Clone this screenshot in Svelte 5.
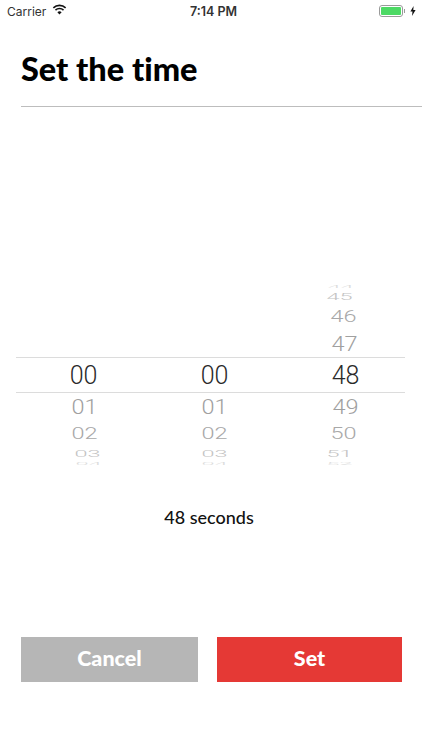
<script>
  const rows = [
    { h: 5, sy: 0.18, c: '#dcdcdc' },
    { h: 15, sy: 0.42, c: '#c4c4c4' },
    { h: 26, sy: 0.68, c: '#a8a8a8' },
    { h: 28, sy: 0.88, c: '#a0a0a0' },
    { h: 35, sy: 1, c: '#2a2a2a', cur: true },
    { h: 28, sy: 0.88, c: '#a0a0a0' },
    { h: 26, sy: 0.68, c: '#a8a8a8' },
    { h: 14, sy: 0.42, c: '#c4c4c4' },
    { h: 6, sy: 0.18, c: '#dcdcdc' }
  ];
  const cols = [
    { key: 'h', vals: ['', '', '', '', '00', '01', '02', '03', '04'], dx: [0, 0, 0, 0, 0, 1, 1, 4, 5] },
    { key: 'm', vals: ['', '', '', '', '00', '01', '02', '03', '04'], dx: [0, 0, 0, 0, 0, 0, 0, 0, 0] },
    { key: 's', vals: ['44', '45', '46', '47', '48', '49', '50', '51', '52'], dx: [-5, -6, -2, -1, 0, 0, -2, -6, -6] }
  ];
</script>

<div class="screen">
  <div class="status">
    <div class="left">
      <span>Carrier</span>
      <svg width="15" height="11" viewBox="0 0 16 12" aria-hidden="true">
        <path d="M8 11.5 5.7 8.9a3.4 3.4 0 0 1 4.6 0Z" fill="#111"/>
        <path d="M3.6 6.7a6.3 6.3 0 0 1 8.8 0" fill="none" stroke="#111" stroke-width="1.7"/>
        <path d="M1.3 4.2a9.6 9.6 0 0 1 13.4 0" fill="none" stroke="#111" stroke-width="1.7"/>
      </svg>
    </div>
    <div class="clock">7:14 PM</div>
    <div class="right">
      <span class="battery"><span class="fill"></span></span>
      <span class="nub"></span>
      <svg width="6" height="10" viewBox="0 0 6 10" aria-hidden="true">
        <path d="M3.6 0 .4 5.6h2.1L2 10l3.6-6H3.3Z" fill="#111"/>
      </svg>
    </div>
  </div>

  <h1>Set the time</h1>
  <div class="rule"></div>

  <div class="picker">
    <div class="band"></div>
    {#each cols as col (col.key)}
      <div class="col">
        {#each rows as r, i}
          <div class="row" class:cur={r.cur} style="height:{r.h}px;color:{r.c}">
            <span style="transform:translate({col.dx[i]}px,1px) scaleY({r.sy})">{col.vals[i]}</span>
          </div>
        {/each}
      </div>
    {/each}
  </div>

  <p class="summary">48 seconds</p>

  <div class="actions">
    <button class="cancel">Cancel</button>
    <button class="set">Set</button>
  </div>
</div>

<style>
  :global(body) {
    margin: 0;
    background: #fff;
  }
  .screen {
    width: 422px;
    height: 750px;
    display: flex;
    flex-direction: column;
    background: #fff;
    overflow: hidden;
    font-family: "Liberation Sans", Arial, sans-serif;
  }
  .status {
    height: 22px;
    display: grid;
    grid-template-columns: 183px auto 1fr;
    align-items: center;
    padding: 0 6px 0 7px;
    font-family: Inter, "Liberation Sans", sans-serif;
    font-size: 12px;
    color: #333;
  }
  .left {
    display: flex;
    align-items: center;
    gap: 6px;
  }
  .left svg {
    margin-top: -4px;
  }
  .clock {
    font-weight: 600;
    font-size: 12.5px;
  }
  .right {
    display: flex;
    justify-content: flex-end;
    align-items: center;
  }
  .battery {
    width: 24px;
    height: 12px;
    box-sizing: border-box;
    border: 1px solid #9a9a9a;
    border-radius: 3px;
    padding: 1px;
    display: block;
  }
  .fill {
    display: block;
    height: 100%;
    background: #4cd964;
    border-radius: 1px;
  }
  .nub {
    width: 1.5px;
    height: 4px;
    background: #9a9a9a;
    margin: 0 5px 0 1px;
  }
  h1 {
    margin: 26px 0 0 21px;
    height: 42px;
    line-height: 42px;
    font-family: Lato, "Open Sans", sans-serif;
    font-variant-ligatures: none;
    font-weight: 900;
    font-size: 32.5px;
    color: #000;
  }
  .rule {
    margin: 16px 0 0 21px;
    height: 1px;
    background: #bdbdbd;
  }
  .picker {
    position: relative;
    margin: 176px 17px 0 16px;
    padding-left: 2px;
    height: 183px;
    display: grid;
    grid-template-columns: repeat(3, 131px);
  }
  .band {
    position: absolute;
    left: 0;
    right: 0;
    top: 74px;
    height: 36px;
    box-sizing: border-box;
    border-top: 1px solid #dcdcdc;
    border-bottom: 1px solid #dcdcdc;
  }
  .col {
    display: flex;
    flex-direction: column;
    align-items: center;
  }
  .row {
    width: 100%;
    display: flex;
    align-items: center;
    justify-content: center;
    font-size: 23.5px;
    font-family: Roboto, "Liberation Sans", sans-serif;
    font-weight: 300;
    line-height: 1;
  }
  .row span {
    display: block;
    height: 24px;
    line-height: 24px;
    flex: none;
  }
  .row.cur {
    font-size: 25px;
  }
  .summary {
    margin: 40px 0 0;
    padding-right: 4px;
    text-align: center;
    font-family: Lato, "Open Sans", sans-serif;
    font-weight: 500;
    font-size: 18px;
    line-height: 22px;
    color: #111;
  }
  .actions {
    margin: 109px 0 0 21px;
    display: flex;
    gap: 19px;
  }
  button {
    height: 45px;
    border: 0;
    padding: 0 0 3px;
    color: #fff;
    font-family: Lato, "Open Sans", sans-serif;
    font-weight: 900;
    font-size: 21.5px;
  }
  .cancel {
    width: 177px;
    background: #b6b6b6;
  }
  .set {
    width: 185px;
    background: #e53935;
  }
</style>
